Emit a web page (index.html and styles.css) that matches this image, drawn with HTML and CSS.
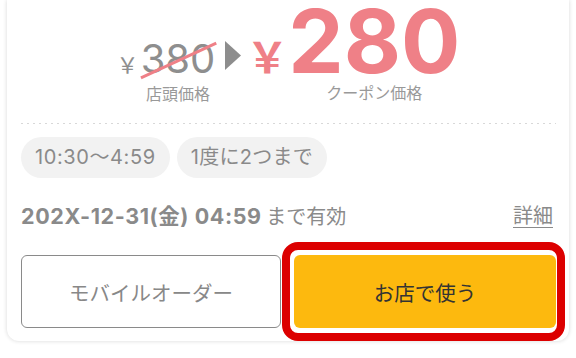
FILE: index.html
```html
<!DOCTYPE html>
<html lang="ja">
<head>
<meta charset="utf-8">
<link rel="stylesheet" href="styles.css">
</head>
<body>
<div class="card">
  <div class="price-row">
    <span class="yen-small">￥</span>
    <div class="price-col">
      <span class="old-price">380</span>
      <span class="label">店頭価格</span>
    </div>
    <span class="arrow"><svg width="16" height="29" viewBox="0 0 16 29"><path d="M0 0 L16 14.5 L0 29 Z" fill="#8d8d8d"/></svg></span>
    <span class="yen-big">￥</span>
    <div class="price-col">
      <span class="new-price">280</span>
      <span class="label">クーポン価格</span>
    </div>
  </div>
  <div class="divider"></div>
  <div class="chips">
    <span class="chip chip-time">10:30〜4:59</span>
    <span class="chip">1度に2つまで</span>
  </div>
  <div class="expiry">
    <span class="expiry-text"><b class="date">202X-12-31(金) 04:59</b> まで有効</span>
    <a class="detail">詳細</a>
  </div>
  <div class="buttons">
    <button class="btn btn-outline">モバイルオーダー</button>
    <div class="highlight">
      <button class="btn btn-primary">お店で使う</button>
    </div>
  </div>
</div>
</body>
</html>
```
FILE: styles.css
```css
html, body {
  margin: 0;
  padding: 0;
  background: #ffffff;
}
body {
  font-family: "Noto Sans CJK JP", "Noto Sans", sans-serif;
  width: 576px;
  height: 358px;
  overflow: hidden;
}
.card {
  margin: 0 7px;
  width: 562px;
  box-sizing: border-box;
  padding: 0 13px 13px 14px;
  background: #fff;
  border-radius: 0 0 12px 12px;
  box-shadow: 0 0 4px rgba(0, 0, 0, 0.16);
}
.price-row {
  display: flex;
  justify-content: center;
  align-items: baseline;
  height: 110px;
}
.yen-small {
  font-family: "Noto Sans CJK JP", sans-serif;
  font-size: 22px;
  color: #8e8e8e;
  margin-right: 2px;
}
.price-col {
  display: flex;
  flex-direction: column;
  align-items: center;
}
.old-price {
  position: relative;
  font-family: Inter, sans-serif;
  font-size: 40px;
  line-height: 48.2px;
  color: #8e8e8e;
}
.old-price::after {
  content: "";
  position: absolute;
  left: -4px;
  top: 24.3px;
  width: 83px;
  height: 2.5px;
  background: #ef8087;
  transform: rotate(-24.8deg);
  transform-origin: center;
}
.label {
  font-size: 16px;
  line-height: 20px;
  color: #999;
}
.arrow {
  margin: 0 5px 0 10px;
}
.arrow svg {
  vertical-align: 3px;
}
.yen-big {
  font-family: "Noto Sans CJK JP", sans-serif;
  font-weight: bold;
  font-size: 42px;
  color: #ef8087;
  margin-right: 0;
}
.new-price {
  font-family: Inter, sans-serif;
  font-weight: bold;
  font-size: 88px;
  line-height: 82.4px;
  color: #ef8087;
}
.divider {
  margin-top: 13px;
  height: 1px;
  background-image: linear-gradient(to right, #d8d8d8 2px, transparent 2px);
  background-size: 6px 1px;
  background-repeat: repeat-x;
}
.chips {
  display: flex;
  gap: 7px;
  margin-top: 13px;
}
.chip {
  height: 41px;
  line-height: 41px;
  padding: 0 14px;
  border-radius: 21px;
  background: #f2f2f2;
  color: #8a8a8a;
  font-family: Inter, "Noto Sans CJK JP", sans-serif;
  font-size: 20px;
  letter-spacing: 0.3px;
}
.chip-time {
  letter-spacing: 0.6px;
}
.expiry {
  display: flex;
  justify-content: space-between;
  align-items: center;
  margin-top: 24px;
  height: 24px;
  color: #8a8a8a;
  font-size: 20px;
}
.date {
  font-family: Inter, "Noto Sans CJK JP", sans-serif;
  font-weight: bold;
  font-size: 21.5px;
  letter-spacing: 0.6px;
}
.detail {
  text-decoration: underline;
  text-underline-offset: 4px;
  text-decoration-thickness: 1px;
  font-size: 20px;
  margin-right: 3px;
}
.buttons {
  display: grid;
  grid-template-columns: 260px 262px;
  gap: 13px;
  margin-top: 29px;
}
.btn {
  display: block;
  width: 100%;
  height: 73px;
  border-radius: 6px;
  font-family: "Noto Sans CJK JP", "Noto Sans", sans-serif;
  font-size: 20.5px;
  margin: 0;
  padding: 0;
}
.btn-outline {
  background: #fff;
  border: 1.5px solid #8a8a8a;
  color: #888;
}
.highlight {
  position: relative;
}
.highlight::before {
  content: "";
  position: absolute;
  left: -12px;
  right: -9px;
  top: -13px;
  bottom: -13px;
  border: 8.5px solid #dc0000;
  border-radius: 16px;
  pointer-events: none;
}
.btn-primary {
  background: #fdb90e;
  border: none;
  color: #333;
}
```
